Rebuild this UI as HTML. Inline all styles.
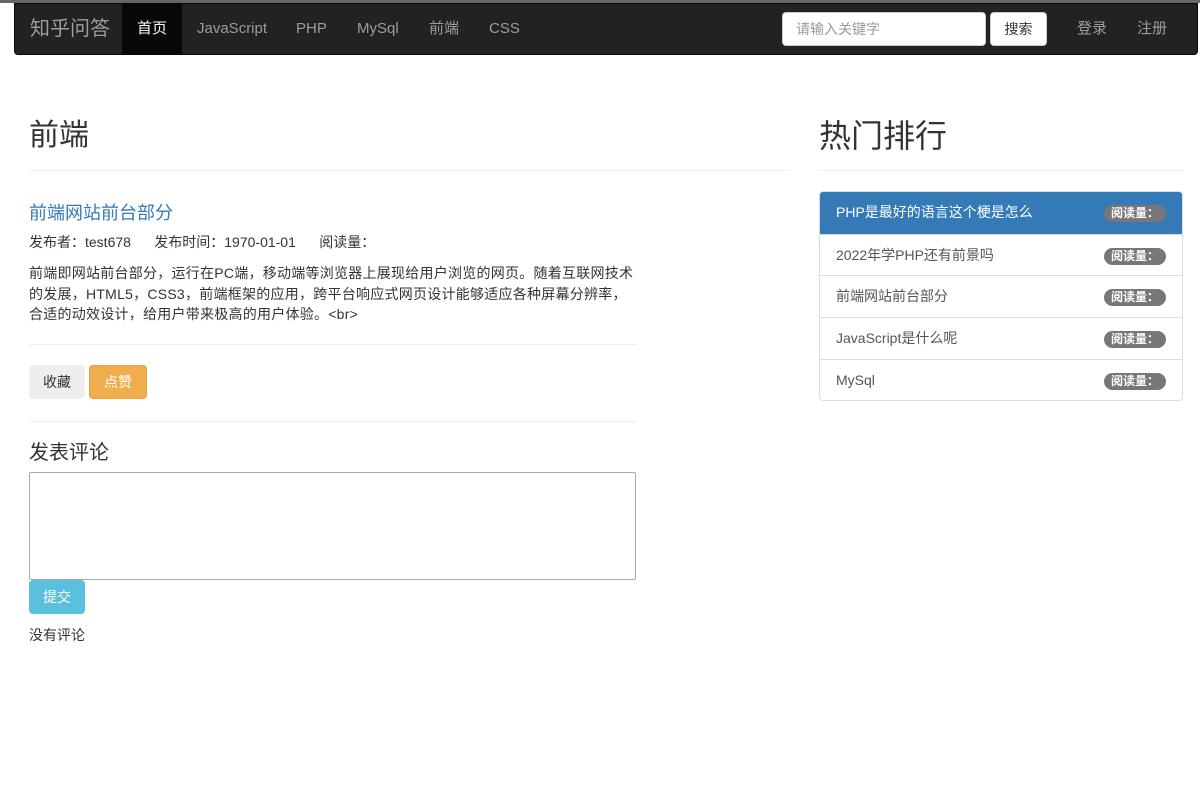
<!DOCTYPE html>
<html><head><meta charset="utf-8"><style>
*{box-sizing:border-box}
body{margin:0;width:1200px;height:800px;background:#fff;font-family:"Liberation Sans","Noto Sans CJK SC",sans-serif;font-size:14px;color:#333;position:relative;overflow:hidden}
.top{position:absolute;left:0;top:0;width:1200px;height:3px;background:#666}
.nav{position:absolute;left:14px;top:3px;width:1184px;height:52px;background:#222;border:1px solid #080808;border-radius:0 0 4px 4px}
.nav a{position:absolute;top:0;height:50px;line-height:50px;color:#9d9d9d;font-size:15px;text-decoration:none}
.brand{font-size:20px!important;left:15px}
.act{background:#080808;color:#fff!important;padding:0 15px;left:107px}
.search{position:absolute;left:767px;top:8px;width:204px;height:34px;background:#fff;border-radius:4px;border:1px solid #ccc;color:#999;line-height:32px;padding-left:13px;font-size:14px}
.sbtn{position:absolute;left:975px;top:8px;width:57px;height:34px;background:#fff;border-radius:4px;border:1px solid #ccc;color:#333;line-height:32px;text-align:center}
.abs{position:absolute}
hr{position:absolute;margin:0;border:0;border-top:1px solid #eee;height:0}
.btn{position:absolute;height:34px;line-height:34px;border-radius:4px;padding:0 14px;font-size:14px}
.list{position:absolute;left:819px;top:191px;width:364px;border:1px solid #ddd;border-radius:4px;overflow:hidden}
.item{height:41.7px;line-height:41px;padding-left:16px;border-top:1px solid #ddd;position:relative;font-size:14px;color:#555}
.item:first-child{border-top:0;background:#337ab7;color:#fff}
.badge{position:absolute;right:16px;top:13px;height:17px;line-height:17px;background:#777;color:#fff;font-size:12px;font-weight:bold;border-radius:9px;padding:0 7px}
</style></head><body>
<div class="top"></div>
<div class="nav">
<a class="brand">知乎问答</a>
<a class="act">首页</a>
<a style="left:182px">JavaScript</a>
<a style="left:281px">PHP</a>
<a style="left:342px">MySql</a>
<a style="left:414px">前端</a>
<a style="left:474px">CSS</a>
<div class="search">请输入关键字</div>
<div class="sbtn">搜索</div>
<a style="left:1062px">登录</a>
<a style="left:1122px">注册</a>
</div>
<div class="abs" style="left:29px;top:116px;font-size:30px;line-height:40px">前端</div>
<hr style="left:29px;top:170px;width:760px">
<div class="abs" style="left:29px;top:201px;font-size:18px;color:#337ab7;line-height:24px">前端网站前台部分</div>
<div class="abs" style="left:29px;top:232px;line-height:20px">发布者：test678&nbsp;&nbsp;&nbsp;&nbsp;&nbsp;&nbsp;发布时间：1970-01-01&nbsp;&nbsp;&nbsp;&nbsp;&nbsp;&nbsp;阅读量：</div>
<div class="abs" style="left:29px;top:263px;width:607px;line-height:20.5px;font-size:14px;letter-spacing:0.25px">前端即网站前台部分，运行在PC端，移动端等浏览器上展现给用户浏览的网页。随着互联网技术的发展，HTML5，CSS3，前端框架的应用，跨平台响应式网页设计能够适应各种屏幕分辨率，合适的动效设计，给用户带来极高的用户体验。&lt;br&gt;</div>
<hr style="left:29px;top:344px;width:607px">
<div class="btn" style="left:29px;top:365px;background:#eee;color:#333">收藏</div>
<div class="btn" style="left:89px;top:365px;background:#f0ad4e;color:#fff;border:1px solid #eea236;line-height:32px">点赞</div>
<hr style="left:29px;top:421px;width:607px">
<div class="abs" style="left:29px;top:440px;font-size:20px;line-height:26px">发表评论</div>
<div class="abs" style="left:29px;top:472px;width:607px;height:108px;border:1px solid #a9a9a9;border-radius:2px"></div>
<div class="btn" style="left:29px;top:580px;background:#5bc0de;color:#fff">提交</div>
<div class="abs" style="left:29px;top:625px;line-height:20px">没有评论</div>
<div class="abs" style="left:819px;top:115px;font-size:32px;line-height:42px">热门排行</div>
<hr style="left:819px;top:170px;width:364px">
<div class="list">
<div class="item">PHP是最好的语言这个梗是怎么<span class="badge">阅读量：</span></div>
<div class="item">2022年学PHP还有前景吗<span class="badge">阅读量：</span></div>
<div class="item">前端网站前台部分<span class="badge">阅读量：</span></div>
<div class="item">JavaScript是什么呢<span class="badge">阅读量：</span></div>
<div class="item">MySql<span class="badge">阅读量：</span></div>
</div>
</body></html>
